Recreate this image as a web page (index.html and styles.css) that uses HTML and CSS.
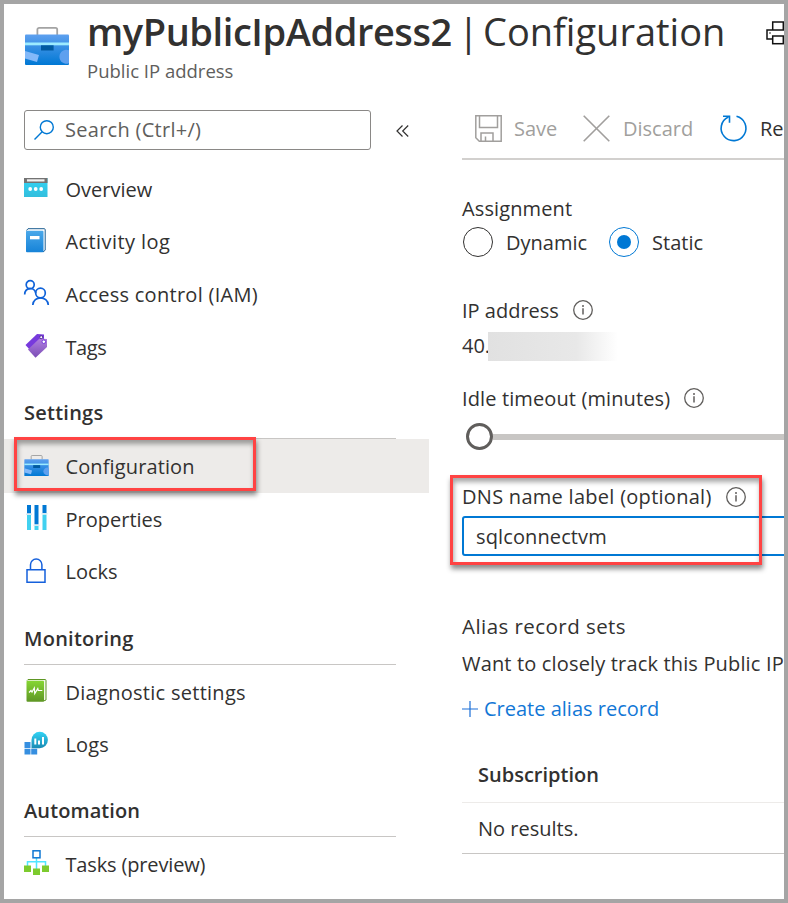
FILE: index.html
```
<!DOCTYPE html>
<html lang="en">
<head>
<meta charset="utf-8">
<title>myPublicIpAddress2 | Configuration</title>
<link rel="stylesheet" href="styles.css">
</head>
<body>
<svg class="defs" width="0" height="0" aria-hidden="true">
  <defs>
    <linearGradient id="blue" x1="0" y1="0" x2="0" y2="1"><stop offset="0" stop-color="#5ea0ef"/><stop offset="1" stop-color="#0078d4"/></linearGradient>
    <linearGradient id="book" x1="0" y1="0" x2="0" y2="1"><stop offset="0" stop-color="#4aa8ea"/><stop offset="1" stop-color="#1683d8"/></linearGradient>
    <linearGradient id="cyan" x1="0" y1="0" x2="0" y2="1"><stop offset="0" stop-color="#32d4f5"/><stop offset="1" stop-color="#32bedd"/></linearGradient>
    <linearGradient id="teal" x1="0" y1="0" x2="0" y2="1"><stop offset="0" stop-color="#32d4f5"/><stop offset="1" stop-color="#198ab3"/></linearGradient>
    <linearGradient id="green" x1="0" y1="0" x2="0" y2="1"><stop offset="0" stop-color="#86d633"/><stop offset="1" stop-color="#5e9624"/></linearGradient>
    <linearGradient id="purple" x1="0" y1="0" x2="0" y2="1"><stop offset="0" stop-color="#b07fe0"/><stop offset="1" stop-color="#7b4db5"/></linearGradient>
    <symbol id="briefcase" viewBox="0 0 44 38">
      <path d="M12.400 8V2.600a1.700 1.700 0 0 1 1.700-1.700h16.400a1.700 1.700 0 0 1 1.700 1.700V8" fill="none" stroke="#a3a3a3" stroke-width="1.800"/>
      <rect y="7.500" width="44" height="30.500" rx="1" fill="url(#blue)"/>
      <rect y="15.500" width="44" height="2.800" fill="#9cebff"/>
      <rect x="16" y="18.300" width="12.600" height="5.200" fill="#005ba1"/>
      <path d="M0 24l14 4-2 7-12-3.500z" fill="#83b9f9"/>
      <path d="M44 23.200a7 7 0 1 0 0 13z" fill="#5ea0ef"/>
    </symbol>
    <symbol id="info" viewBox="0 0 20 20">
      <circle cx="10" cy="10" r="9.300" fill="none" stroke="#605e5c" stroke-width="1.300"/>
      <path d="M10 8.300v6.200" stroke="#605e5c" stroke-width="1.500"/><circle cx="10" cy="6" r="1" fill="#605e5c"/>
    </symbol>
  </defs>
</svg>
<div class="window">
  <header class="header">
    <svg class="header-icon"><use href="#briefcase"/></svg>
    <div class="header-text">
      <h1 class="title"><span class="title-name">myPublicIpAddress2</span><span class="title-bar">|</span><span class="title-page">Configuration</span></h1>
      <div class="subtitle">Public IP address</div>
    </div>
    <svg class="print" viewBox="0 0 24 24"><path d="M6.700 9V1h10.600v8M6.700 18H1V9h22v9h-5.700" fill="none" stroke="#111" stroke-width="1.500"/><rect x="6.700" y="15" width="10.600" height="7.700" fill="#fff" stroke="#111" stroke-width="1.500"/><circle cx="4" cy="12" r=".8" fill="#111"/></svg>
  </header>
  <div class="body">
    <aside class="side">
      <div class="search-row">
        <div class="search"><svg class="search-icon" viewBox="0 0 20 20"><circle cx="12.800" cy="7.200" r="6.500" fill="none" stroke="#0078d4" stroke-width="1.400"/><path d="M8.200 11.800L.5 19.500" stroke="#0078d4" stroke-width="1.400"/></svg><span class="looser">Search (Ctrl+/)</span></div>
        <svg class="collapse" viewBox="0 0 13 12"><path d="M6.500.5L1 6l5.500 5.500M12.200.5L6.700 6l5.500 5.500" fill="none" stroke="#323130" stroke-width="1.200"/></svg>
      </div>
      <nav>
        <div class="item"><svg class="ico" viewBox="0 0 24 25"><rect y="3" width="23.500" height="19" fill="url(#cyan)"/><rect y="3" width="23.500" height="5" fill="#737373"/><rect x="3" y="4.300" width="17.500" height="2.200" fill="#f2f2f2"/><g fill="#fff"><circle cx="6.200" cy="14" r="1.900"/><circle cx="11.700" cy="14" r="1.900"/><circle cx="17.200" cy="14" r="1.900"/></g></svg><span>Overview</span></div>
        <div class="item"><svg class="ico" viewBox="0 0 24 25"><path d="M2.500 2.500L4 .7h16.200a1 1 0 0 1 1 1v20.500l-2.200 1.800" fill="#fff" stroke="#1b5d91" stroke-width="1"/><rect x="2" y="2.700" width="17.500" height="21.500" rx="1" fill="url(#book)"/><rect x="6" y="8" width="9.500" height="3.300" fill="#fff"/></svg><span class="loosest">Activity log</span></div>
        <div class="item"><svg class="ico wide" viewBox="0 0 25 25"><g fill="none" stroke="#0f62d9" stroke-width="1.700"><circle cx="6.200" cy="4.700" r="4"/><circle cx="16.500" cy="13" r="4.800"/><path d="M.7 14.500C.8 6.800 10.500 6.800 11.700 13M8.800 25c.5-9.500 15-9.500 15.500 0"/></g></svg><span class="looser">Access control (IAM)</span></div>
        <div class="item"><svg class="ico" viewBox="0 0 24 25"><path d="M1.500 12L13 1l7 .5v5L6 17z" fill="#773adc"/><path d="M4 16.500L15.500 5.500l7.500.5v8L11.500 24.800z" fill="url(#purple)"/><circle cx="17.200" cy="4.200" r="1.500" fill="#fff" stroke="#552f99"/><circle cx="19.800" cy="8.700" r="1.800" fill="#fff" stroke="#773adc"/></svg><span class="tight">Tags</span></div>
        <h2 class="group settings"><span>Settings</span></h2>
        <div class="item selected"><svg class="ico wide brief"><use href="#briefcase"/></svg><span class="loose">Configuration</span><div class="callout callout-nav"></div></div>
        <div class="item"><svg class="ico" viewBox="0 0 24 25"><path d="M3 0h4v8.500H3zM10.500 0h4v19.500h-4zM18.500 0h4v8h-4z" fill="#0078d4"/><path d="M3 10h4v15H3zM10.500 21h4v4h-4zM18.500 9.500h4V25h-4z" fill="#41d1f0"/><path d="M2 8.500h6v1.500H2zM9.500 19.500h6V21h-6zM17.500 8h6v1.500h-6z" fill="#d8eaf2"/></svg><span>Properties</span></div>
        <div class="item"><svg class="ico" viewBox="0 0 24 25"><path d="M3 11.700h18v12.500H3zM6.500 11V6.700a5.700 5.700 0 0 1 11.400 0V11" fill="none" stroke="#1560dc" stroke-width="1.500"/></svg><span>Locks</span></div>
        <h2 class="group monitoring"><span>Monitoring</span></h2>
        <div class="item"><svg class="ico" viewBox="0 0 24 25"><path d="M3 2.500L4 1.500h17a1 1 0 0 1 1 1V22l-2.500 1" fill="#f3f8e9" stroke="#5e9624"/><rect x="2.500" y="2.700" width="17.500" height="21" rx="1" fill="url(#green)"/><path d="M5 14.500l2-2 1 1.500 2.300-4 .5 5.500 3-5 .5 2h4" fill="none" stroke="#fff" stroke-width="1.200"/></svg><span class="looser">Diagnostic settings</span></div>
        <div class="item"><svg class="ico" viewBox="0 0 24 25"><path d="M.5 11h6v6h-6zM.5 17.700h6v5.800h-6zM7.200 17.700h6v5.800h-6z" fill="#368fe0"/><path d="M7.500 17.200V9a8.200 8.200 0 1 1 8.200 8.200z" fill="url(#teal)"/><path d="M10.300 7.500h2v6h-2zM14 9.500h2v4h-2zM18 6h2v7.500h-2z" fill="#fff"/></svg><span class="loose">Logs</span></div>
        <h2 class="group automation"><span>Automation</span></h2>
        <div class="item"><svg class="ico wide" viewBox="0 0 25 25"><path d="M12.500 8v11M3.500 17v-5.200h18V17" fill="none" stroke="#50e6ff" stroke-width="1.500"/><rect x="9" y=".8" width="7" height="7" fill="#fff" stroke="#0f78d4" stroke-width="1.500"/><path d="M0 15.500h7v6.500H0zM9 18.500h7V25H9zM18 15.500h7v6.500h-7z" fill="#7dcb2e"/></svg><span class="snug">Tasks (preview)</span></div>
      </nav>
    </aside>
    <main class="main">
      <div class="toolbar">
        <svg class="save" viewBox="0 0 27 27"><path d="M.8.8h25.400v25.400H4.300L.8 22.700zM4.500 1v11.500h18V1M6 26v-8h12v8M10.500 26v-4.500" fill="none" stroke="#a19f9d" stroke-width="1.500"/></svg><span>Save</span>
        <svg class="discard" viewBox="0 0 27 27"><path d="M.7.7l25.600 25.600M26.300.7L.7 26.300" stroke="#a19f9d" stroke-width="1.600"/></svg><span>Discard</span>
        <svg class="refresh" viewBox="0 0 27 27"><path d="M16.500 1.200a12.400 12.400 0 1 1-8.200.8M3 1.200h6.500v6.500" fill="none" stroke="#0078d4" stroke-width="1.600"/></svg><span>Re</span>
      </div>
      <div class="line assign"><span class="loose">Assignment</span></div>
      <div class="radios"><i class="radio"></i><span>Dynamic</span><i class="radio on"></i><span>Static</span></div>
      <div class="line ip"><span>IP address</span><svg class="info"><use href="#info"/></svg></div>
      <div class="line ipval"><span class="octet">40.</span><i class="redact"></i></div>
      <div class="line idle"><span class="loose">Idle timeout (minutes)</span><svg class="info"><use href="#info"/></svg></div>
      <div class="slider"><i class="thumb"></i><i class="track"></i></div>
      <div class="dns">
        <div class="line"><span class="looser">DNS name label (optional)</span><svg class="info"><use href="#info"/></svg></div>
        <div class="field"><span class="loose">sqlconnectvm</span></div>
        <div class="callout callout-dns"></div>
      </div>
      <div class="line alias"><span>Alias record sets</span></div>
      <div class="line want"><span>Want to closely track this Public IP</span></div>
      <div class="line create"><svg class="plus" viewBox="0 0 16 16"><path d="M8 0v16M0 8h16" stroke="#1b6fd8" stroke-width="1.200"/></svg><span>Create alias record</span></div>
      <div class="cell head"><span>Subscription</span></div>
      <div class="cell result"><span>No results.</span></div>
    </main>
  </div>
</div>
</body>
</html>
```
FILE: styles.css
```
* { box-sizing: border-box; }
body { margin: 0; font-family: "Open Sans", "Noto Sans", sans-serif; font-size: 20px; line-height: 28px; color: #323130; background: #fff; }
.defs { position: absolute; }
svg { flex: none; overflow: visible; }
span { white-space: nowrap; }
.tight { letter-spacing: -0.4px; }
.snug { letter-spacing: -0.15px; }
.loose { letter-spacing: 0.12px; }
.looser { letter-spacing: 0.28px; }
.loosest { letter-spacing: 0.42px; }
.window { width: 788px; height: 903px; border: 4px solid #a5a5a5; overflow: hidden; }
.header { display: flex; height: 99px; padding-left: 21px; }
.header-icon { width: 44px; height: 38px; margin-top: 23px; }
.header-text { flex: none; width: 696px; padding-left: 18px; }
.title { display: flex; margin: 0; height: 54px; line-height: 54px; font-size: 38px; font-weight: 400; }
.title-name { width: 371px; font-weight: 600; letter-spacing: -0.43px; }
.title-bar { width: 25px; }
.subtitle { height: 26px; line-height: 26px; font-size: 18.5px; color: #605e5c; }
.print { width: 24px; height: 24px; margin: 17px 0 0 1px; }
.body { display: flex; }
.side { width: 425px; flex: none; }
.search-row { display: flex; align-items: center; height: 60px; padding: 7px 0 13px 20px; }
.search { display: flex; align-items: center; width: 347px; height: 40px; padding-left: 9px; gap: 11px; border: 1px solid #8a8886; border-radius: 3px; color: #605e5c; }
.search-icon { width: 20px; height: 20px; }
.collapse { width: 13px; height: 12px; margin: 2px 0 0 25px; }
.item { position: relative; display: flex; align-items: center; height: 52.6px; padding-left: 20px; }
.item span { padding-top: 1px; }
.ico { width: 24px; height: 25px; margin-right: 17.5px; margin-top: -3px; }
.wide { width: 25px; margin-right: 16.5px; }
.brief { height: 21px; margin-top: -2px; }
.selected { height: 53.4px; background: #edebe9; padding-top: 1px; }
.group { display: flex; align-items: flex-end; width: 372px; margin: 0 0 0 20px; padding-bottom: 11px; border-bottom: 1px solid #c8c6c4; font-size: 20px; font-weight: 600; line-height: 28px; letter-spacing: 0.25px; }
.settings { height: 66px; }
.monitoring { height: 67px; margin-bottom: 1px; }
.automation { height: 66px; margin-bottom: 1px; letter-spacing: 0.1px; }
.callout { position: absolute; border: 3px solid #ff4343; box-shadow: 1px 4px 5px rgba(0,0,0,.45), inset 1px 4px 5px rgba(0,0,0,.35); }
.callout-nav { left: 10px; top: -2px; width: 242px; height: 54px; }
.callout-dns { left: -12px; top: -8px; width: 312px; height: 90px; }
.main { flex: 1; min-width: 0; padding-left: 33px; }
.toolbar { display: flex; align-items: center; height: 57px; padding: 0 0 5px 13px; border-bottom: 2px solid #d2d0ce; color: #a19f9d; }
.toolbar span { flex: none; padding-top: 2px; margin-left: 13px; }
.save, .discard, .refresh { width: 27px; height: 27px; }
.toolbar .save + span { width: 69px; margin-left: 12px; }
.discard + span { width: 97px; }
.refresh + span { color: #323130; }
.line { display: flex; align-items: center; height: 28px; }
.info { width: 20px; height: 20px; margin-left: 14px; }
.assign { margin-top: 34px; }
.assign span, .ip span, .idle span, .radios span, .field span, .result span { padding-top: 1px; }
.radios { display: flex; align-items: center; height: 30px; margin-top: 5px; }
.radio { display: grid; place-items: center; width: 30px; height: 30px; margin: 0 13px 0 1px; border: 1px solid #323130; border-radius: 50%; }
.radio.on { margin-left: 22px; border-color: #0078d4; }
.radio.on::after { content: ""; width: 14px; height: 14px; border-radius: 50%; background: #0078d4; }
.ip { margin-top: 39px; }
.ipval { margin-top: 8px; height: 29px; }
.octet { width: 26px; padding-bottom: 2px; }
.redact { width: 130px; height: 29px; background: linear-gradient(90deg, #e1e1e1, #e8e8e8 68%, #fff); }
.idle { margin-top: 23px; }
.slider { display: flex; align-items: center; height: 27px; margin-top: 11px; padding-left: 4px; }
.thumb { width: 27px; height: 27px; border: 3px solid #605e5c; border-radius: 50%; }
.track { flex: 1; height: 6px; background: #c8c6c4; }
.dns { position: relative; margin-top: 33px; }
.field { display: flex; align-items: center; width: 360px; height: 40px; margin-top: 5px; padding-left: 12px; border: 2px solid #0078d4; border-radius: 3px; }
.alias { margin-top: 56px; font-size: 20.5px; letter-spacing: 0.45px; }
.want { margin-top: 10px; letter-spacing: 0.16px; }
.create { margin-top: 17px; color: #1277d6; }
.plus { width: 16px; height: 16px; margin-right: 6px; }
.cell { display: flex; align-items: center; padding-left: 16px; }
.head { height: 56px; margin-top: 24px; border-bottom: 1px solid #edebe9; font-weight: 600; }
.result { height: 51px; border-bottom: 1px solid #c8c6c4; }
```
